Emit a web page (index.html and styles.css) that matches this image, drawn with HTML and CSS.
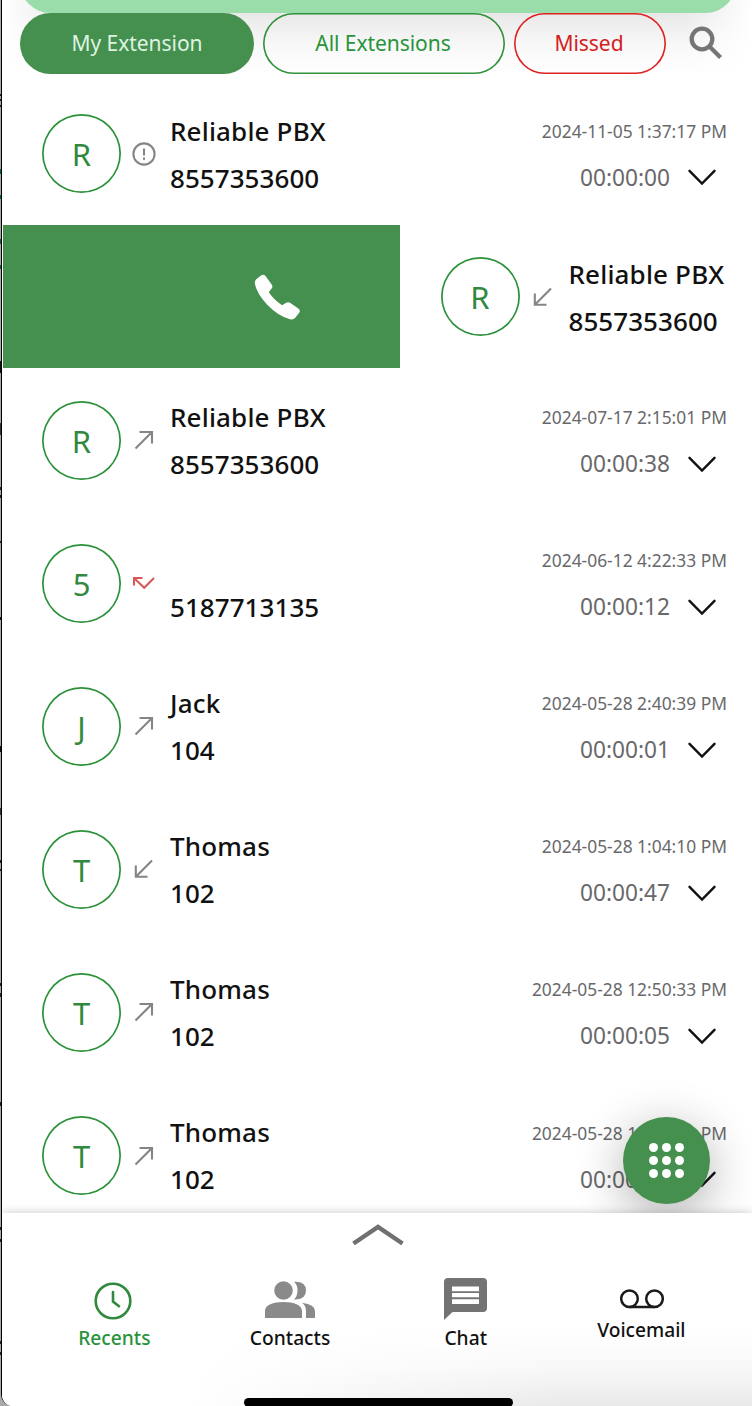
FILE: index.html
```html
<!DOCTYPE html>
<html lang="en">
<head>
<meta charset="utf-8">
<title>Recents</title>
<link rel="stylesheet" href="styles.css">
</head>
<body>
<svg class="defs" width="0" height="0">
  <symbol id="out" viewBox="0 0 20 20"><path d="M1.500 18.500 18 2M5.500 2H18V13.500" /></symbol>
  <symbol id="in" viewBox="0 0 20 20"><path d="M18 1.500 1.800 17.700M1.800 6.500V17.700H13.500" /></symbol>
  <symbol id="down" viewBox="0 0 28 18"><path d="M1.500 2.800 14 15.500 26.500 2.800" /></symbol>
</svg>
<div class="phone">
  <header class="header">
    <div class="banner"></div>
    <button class="tab tab-active">My Extension</button>
    <button class="tab tab-all">All Extensions</button>
    <button class="tab tab-missed">Missed</button>
    <svg class="search" viewBox="0 0 34 34"><circle cx="13" cy="13" r="10.300" /><path d="M20.500 20.500 31.500 31.500" /></svg>
  </header>
  <main class="list">
    <article class="row">
      <div class="avatar">R</div>
      <svg class="dir info" viewBox="0 0 24 24"><circle cx="12" cy="12" r="10.600" /><path d="M12 6.500V13.500M12 15.500V17.700" /></svg>
      <div class="who"><span>Reliable PBX</span><span>8557353600</span></div>
      <div class="meta"><span class="date">2024-11-05 1:37:17 PM</span><span class="dur">00:00:00<svg class="chev"><use href="#down"/></svg></span></div>
    </article>
    <article class="row swiped">
      <div class="call"><svg class="phone-icon" viewBox="0 0 46 46"><path d="M7 1.500Q9.500-.3 11.500 2L17.700 10.500Q19 12.500 17.800 14.300L14.800 18.300Q20 26 28 31.300L31.800 29Q34 27.700 36 28.800L44.300 34.500Q47 36.500 45 39L41.500 43.500Q39.500 46 36 45.300Q24 42 13 30.500Q2.500 19 .8 9.500Q.5 7 2.500 5Z" /></svg></div>
      <div class="avatar">R</div>
      <svg class="dir"><use href="#in"/></svg>
      <div class="who"><span>Reliable PBX</span><span>8557353600</span></div>
    </article>
    <article class="row">
      <div class="avatar">R</div>
      <svg class="dir"><use href="#out"/></svg>
      <div class="who"><span>Reliable PBX</span><span>8557353600</span></div>
      <div class="meta"><span class="date">2024-07-17 2:15:01 PM</span><span class="dur">00:00:38<svg class="chev"><use href="#down"/></svg></span></div>
    </article>
    <article class="row">
      <div class="avatar">5</div>
      <svg class="dir missed" viewBox="0 0 24 20"><path d="M2 12.500V5H10.500M2.300 5.300 12.200 14.700 22 5" /></svg>
      <div class="who"><span></span><span>5187713135</span></div>
      <div class="meta"><span class="date">2024-06-12 4:22:33 PM</span><span class="dur">00:00:12<svg class="chev"><use href="#down"/></svg></span></div>
    </article>
    <article class="row">
      <div class="avatar">J</div>
      <svg class="dir"><use href="#out"/></svg>
      <div class="who"><span>Jack</span><span>104</span></div>
      <div class="meta"><span class="date">2024-05-28 2:40:39 PM</span><span class="dur">00:00:01<svg class="chev"><use href="#down"/></svg></span></div>
    </article>
    <article class="row">
      <div class="avatar">T</div>
      <svg class="dir"><use href="#in"/></svg>
      <div class="who"><span>Thomas</span><span>102</span></div>
      <div class="meta"><span class="date">2024-05-28 1:04:10 PM</span><span class="dur">00:00:47<svg class="chev"><use href="#down"/></svg></span></div>
    </article>
    <article class="row">
      <div class="avatar">T</div>
      <svg class="dir"><use href="#out"/></svg>
      <div class="who"><span>Thomas</span><span>102</span></div>
      <div class="meta"><span class="date">2024-05-28 12:50:33 PM</span><span class="dur">00:00:05<svg class="chev"><use href="#down"/></svg></span></div>
    </article>
    <article class="row">
      <div class="avatar">T</div>
      <svg class="dir"><use href="#out"/></svg>
      <div class="who"><span>Thomas</span><span>102</span></div>
      <div class="meta"><span class="date">2024-05-28 12:50:10 PM</span><span class="dur">00:00:00<svg class="chev"><use href="#down"/></svg></span></div>
    </article>
    <button class="fab" aria-label="Dialpad"><i></i><i></i><i></i><i></i><i></i><i></i><i></i><i></i><i></i></button>
  </main>
  <footer class="footer">
    <svg class="up" viewBox="0 0 52 24"><path d="M1.500 20.500 26 4 50.500 20.500" /></svg>
    <nav class="nav">
      <a class="item current">
        <svg width="38" height="38" viewBox="0 0 38 38" fill="none" stroke="#2f8a3e" stroke-width="2.600"><circle cx="19" cy="19" r="17.300"/><path d="M19 10V19.500L25 24.200" stroke-linecap="round"/></svg>
        <span>Recents</span>
      </a>
      <a class="item contacts">
        <svg width="50" height="38" viewBox="0 0 50 38" fill="#8a8a8a"><circle cx="18.500" cy="9.500" r="9.300"/><path d="M0 37V30C0 24 8 21 18.500 21S37 24 37 30V37ZM29 .8Q41 0 41 9.500T29 18.500Q32.500 15 32.500 9.500T29 .8ZM37 21.700Q50 23.500 50 30V37H41V30Q41 24.500 37 21.700Z"/></svg>
        <span>Contacts</span>
      </a>
      <a class="item">
        <svg width="43" height="42" viewBox="0 0 43 42"><path fill="#737373" d="M4 0H39Q43 0 43 4V30Q43 34 39 34H8.500L0 42V4Q0 0 4 0Z"/><path fill="#fff" d="M8 8.500H35V13.200H8ZM8 15H35V19.200H8ZM8 21.300H35V26H8Z"/></svg>
        <span>Chat</span>
      </a>
      <a class="item voicemail">
        <svg width="44" height="20" viewBox="0 0 44 20" fill="none" stroke="#1a1a1a" stroke-width="2.500"><circle cx="9.500" cy="9.700" r="8.300"/><circle cx="34.500" cy="9.700" r="8.300"/><path d="M9.500 18H34.500"/></svg>
        <span>Voicemail</span>
      </a>
    </nav>
    <div class="home"></div>
  </footer>
</div>
</body>
</html>
```
FILE: styles.css
```css
* { box-sizing: border-box; }
body {
  margin: 0;
  /* dark marks along the device's outer edge */
  background:
    linear-gradient(#222, #222) 0 94px / 1px 2px no-repeat,
    linear-gradient(#222, #222) 0 99px / 1px 2px no-repeat,
    linear-gradient(#222, #222) 0 105px / 1px 2px no-repeat,
    linear-gradient(#063, #063) 0 169px / 1px 5px no-repeat,
    linear-gradient(#063, #063) 0 195px / 1px 4px no-repeat,
    linear-gradient(#063, #063) 0 239px / 1px 5px no-repeat,
    linear-gradient(#063, #063) 0 265px / 1px 4px no-repeat,
    linear-gradient(#111, #111) 0 361px / 1px 12px no-repeat,
    linear-gradient(#333, #333) 0 423px / 1px 12px no-repeat,
    linear-gradient(#222, #222) 0 487px / 1px 3px no-repeat,
    linear-gradient(#222, #222) 0 495px / 1px 3px no-repeat,
    linear-gradient(#222, #222) 0 541px / 1px 2px no-repeat,
    linear-gradient(#111, #111) 0 617px / 1px 3px no-repeat,
    linear-gradient(#111, #111) 0 746px / 1px 6px no-repeat,
    linear-gradient(#333, #333) 0 808px / 1px 7px no-repeat,
    linear-gradient(#222, #222) 0 860px / 1px 3px no-repeat,
    linear-gradient(#222, #222) 0 869px / 1px 2px no-repeat,
    linear-gradient(#222, #222) 0 983px / 1px 3px no-repeat,
    linear-gradient(#222, #222) 0 993px / 1px 4px no-repeat,
    linear-gradient(#222, #222) 0 1102px / 1px 4px no-repeat,
    linear-gradient(#222, #222) 0 1227px / 1px 3px no-repeat,
    linear-gradient(#222, #222) 0 1239px / 1px 3px no-repeat,
    linear-gradient(#222, #222) 0 1341px / 1px 3px no-repeat,
    linear-gradient(#222, #222) 0 1352px / 1px 3px no-repeat,
    #aaa;
  font-family: "Noto Sans", "Open Sans", sans-serif;
}
.defs { position: absolute; }
.phone {
  display: flex;
  flex-direction: column;
  width: 751px;
  height: 1406px;
  margin-left: 1px;
  border-left: 1px solid #000;
  border-bottom-left-radius: 12px;
  background: #fff;
  overflow: hidden;
}
.header {
  position: relative;
  display: flex;
  align-items: flex-start;
  gap: 9px;
  height: 82px;
  flex: none;
  padding: 13px 0 0 18px;
  background: linear-gradient(90deg, #fff 0, transparent 9%, transparent 91%, #fff 100%), linear-gradient(#e8e8e8 12px, #f8f8f8 45px, #fff 76px);
}
.banner {
  position: absolute;
  left: 18px;
  top: -48px;
  width: 716px;
  height: 60.500px;
  border-radius: 40px;
  background: #9addab;
}
.tab {
  position: relative;
  height: 60.500px;
  padding: 0;
  border: 0;
  border-radius: 31px;
  background: transparent;
  box-shadow: inset 0 0 0 1.600px #2f9138;
  color: #28933a;
  font: 400 21px/61px "Noto Sans", sans-serif;
  letter-spacing: -.05px;
}
.tab-active { width: 234px; box-shadow: none; background: #46904f; color: #dff3e2; }
.tab-all { width: 242px; padding-right: 2px; }
.tab-missed { width: 152px; box-shadow: inset 0 0 0 1.600px #d22; color: #d32020; padding-right: 2px; }
.search {
  width: 34px;
  height: 34px;
  margin: 13px 0 0 14px;
  fill: none;
  stroke: #757575;
  stroke-width: 4.300;
}
.list {
  position: relative;
  flex: none;
  height: 1131px;
  padding-top: .3px;
  overflow: hidden;
}
.row {
  display: flex;
  align-items: center;
  height: 143.100px;
  padding: 0 25px 0 40px;
}
.swiped { padding-left: 1px; }
.call {
  display: flex;
  align-items: center;
  width: 397px;
  height: 143px;
  margin-right: 40.500px;
  padding-left: 251px;
  flex: none;
  background: #46904f;
}
.phone-icon { width: 46px; height: 46px; fill: #fff; }
.avatar {
  flex: none;
  width: 79px;
  height: 79px;
  border-radius: 50%;
  box-shadow: inset 0 0 0 1.700px #2b9138;
  color: #318940;
  font-size: 31px;
  line-height: 81px;
  text-align: center;
}
.dir {
  flex: none;
  width: 20px;
  height: 20px;
  margin: 0 15px 0 13px;
  fill: none;
  stroke: #858585;
  stroke-width: 2.100;
}
.info { width: 24px; height: 24px; margin: 0 13px 0 11px; }
.missed { width: 24px; margin: 0 13px 0 11px; stroke: #d85858; }
.who {
  display: flex;
  flex: none;
  flex-direction: column;
  margin: 1.400px 0 0 1px;
  color: #111;
  font-weight: 500;
  font-size: 26px;
  letter-spacing: .17px;
  line-height: 47px;
  white-space: nowrap;
}
.who span { height: 47px; }
.who span + span { letter-spacing: .05px; }
.meta {
  display: flex;
  flex: 1;
  flex-direction: column;
  align-items: flex-end;
  margin-top: 1px;
  color: #68686b;
  font-weight: 400;
  line-height: 47px;
}
.date { font-size: 17.400px; line-height: 46px; }
.dur { display: flex; align-items: center; font-size: 22.700px; padding-right: 11px; }
.chev {
  width: 28px;
  height: 18px;
  margin-left: 18px;
  fill: none;
  stroke: #111;
  stroke-width: 2.400;
  stroke-linecap: round;
}
.fab {
  position: absolute;
  left: 621px;
  top: 1034.500px;
  display: grid;
  grid-template-columns: repeat(3, 9px);
  gap: 4px;
  place-content: center;
  width: 87px;
  height: 87.500px;
  padding: 0;
  border: 0;
  border-radius: 50%;
  background: #46904f;
  box-shadow: 0 12px 50px rgba(0, 0, 0, .32);
}
.fab i { width: 9px; height: 9px; border-radius: 50%; background: #fff; }
.footer {
  position: relative;
  display: flex;
  flex: 1;
  flex-direction: column;
  align-items: center;
  padding-left: 2px;
  background: linear-gradient(90deg, #fff 25%, rgba(255, 255, 255, 0) 75%), linear-gradient(#fff 60%, #f8f8f8 80%, #e9e9e9);
  box-shadow: 0 0 9px rgba(0, 0, 0, .22);
}
.up { width: 52px; height: 24px; margin-top: 10px; fill: none; stroke: #707070; stroke-width: 4.500; }
.nav {
  display: grid;
  grid-template-columns: repeat(4, 175.700px);
  width: 703px;
  height: 151px;
}
.item {
  display: flex;
  flex-direction: column;
  align-items: center;
  justify-content: flex-end;
  height: 103.500px;
  color: #111;
  font-weight: 500;
  font-size: 19.200px;
  line-height: 26px;
}
.item span { margin-top: 5px; }
.item svg { flex: none; }
.current { color: #28933a; }
.current svg { margin: 0 3px 0 0; }
.contacts svg { margin-bottom: 1px; }
.voicemail { height: 96px; }
.voicemail span { margin-top: 8px; }
.voicemail svg { margin-left: 1px; }
.home { width: 269px; height: 9px; border-radius: 5px; background: #000; }
```
